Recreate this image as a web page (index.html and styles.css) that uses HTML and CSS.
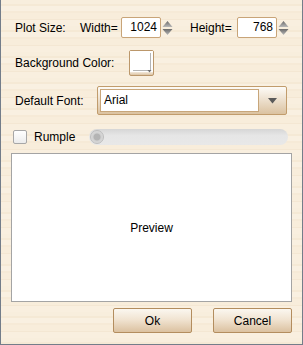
FILE: index.html
```html
<!DOCTYPE html>
<html lang="en">
  <head>
    <meta charset="UTF-8" />
    <title>Plot Settings</title>
    <link rel="stylesheet" href="styles.css">
  </head>
  <body>
    <div class="dialog">
      <!-- plot size -->
      <div class="row row-size">
        <span class="lbl-plot">Plot Size:</span>
        <span class="lbl-w">Width=</span>
        <div class="num">1024</div>
        <svg class="spin" width="11" height="21" viewBox="0 0 11 21">
          <defs>
            <linearGradient id="sg" x1="0" y1="0" x2="0" y2="1">
              <stop offset="0" stop-color="#6a6a6a" />
              <stop offset="1" stop-color="#b8b8b8" />
            </linearGradient>
          </defs>
          <polygon points="5.5,4 10.5,10 0.5,10" fill="url(#sg)" />
          <polygon points="0.5,12 10.5,12 5.5,18" fill="url(#sg)" />
        </svg>
        <span class="lbl-h">Height=</span>
        <div class="num">768</div>
        <svg class="spin" width="11" height="21" viewBox="0 0 11 21">
          <polygon points="5.5,4 10.5,10 0.5,10" fill="url(#sg)" />
          <polygon points="0.5,12 10.5,12 5.5,18" fill="url(#sg)" />
        </svg>
      </div>

      <!-- background colour -->
      <div class="row row-color">
        <span class="lbl-bg">Background Color:</span>
        <div class="color-btn">
          <svg width="23" height="24" viewBox="0 0 23 24">
            <rect x="0" y="0" width="23" height="21" fill="#fff" />
            <line x1="20.5" y1="2" x2="20.5" y2="19" stroke="#b4b4b4" />
            <line x1="3" y1="19.5" x2="21" y2="19.5" stroke="#b4b4b4" />
            <polygon points="17.5,19 21.5,19 19.5,21.5" fill="#707070" />
          </svg>
        </div>
      </div>

      <!-- default font -->
      <div class="row row-font">
        <span class="lbl-font">Default Font:</span>
        <div class="combo">
          <div class="combo-field">Arial</div>
          <div class="combo-arrow">
            <svg width="9" height="6" viewBox="0 0 9 6">
              <polygon points="0,0 9,0 4.5,5.5" fill="#5a5a5a" />
            </svg>
          </div>
        </div>
      </div>

      <!-- rumple -->
      <div class="row row-rumple">
        <div class="check"></div>
        <span class="lbl-rumple">Rumple</span>
        <div class="slider">
          <div class="knob"></div>
        </div>
      </div>

      <div class="preview">Preview</div>

      <div class="buttons">
        <button class="btn">Ok</button>
        <button class="btn">Cancel</button>
      </div>
    </div>
  </body>
</html>
```

FILE: styles.css
```css
* {
  margin: 0;
  padding: 0;
}

body {
  font-family: "Liberation Sans", Arial, sans-serif;
  font-size: 12px;
  color: #000;
}

.dialog {
  width: 303px;
  height: 345px;
  box-sizing: border-box;
  border: 1px solid #737d8a;
  border-top: 0;
  padding: 17px 10px 0;
  background-color: #f7ecda;
  background-image: repeating-linear-gradient(
    180deg,
    #f8eedd 0 4px,
    #f5e9d5 4px 6px,
    #f9f0e1 6px 11px,
    #f6ead7 11px 13px,
    #f8eddb 13px 19px,
    #f4e7d3 19px 20px,
    #f9efdf 20px 26px
  );
}

.row {
  display: flex;
  align-items: center;
}

.row-size {
  height: 21px;
  padding-left: 4px;
}

.lbl-plot {
  width: 65px;
}

.lbl-w {
  width: 41px;
}

.lbl-h {
  width: 47px;
  margin-left: 17px;
}

.num {
  width: 40px;
  height: 21px;
  box-sizing: border-box;
  border: 1px solid #c8a478;
  border-radius: 2px;
  background: #fff;
  text-align: right;
  padding-right: 3px;
  line-height: 19px;
}

.spin {
  margin-left: 1px;
}

.row-color {
  height: 26px;
  margin-top: 12px;
  padding-left: 4px;
}

.lbl-bg {
  width: 114px;
}

.color-btn {
  width: 25px;
  height: 26px;
  box-sizing: border-box;
  border: 1px solid #bb976b;
  border-radius: 2px;
  background: linear-gradient(#fff 0 80%, #dcc3a2);
}

.color-btn svg {
  display: block;
}

.row-font {
  height: 29px;
  margin-top: 10px;
  padding-left: 4px;
}

.lbl-font {
  width: 82px;
}

.combo {
  width: 190px;
  height: 29px;
  box-sizing: border-box;
  border: 1px solid #c19c6c;
  border-radius: 2px;
  padding: 2px 0 2px 2px;
  display: flex;
  background: linear-gradient(#fdfbf7, #dbc2a0);
}

.combo-field {
  flex: 1;
  background: #fff;
  border: 1px solid #c8a67a;
  padding-left: 3px;
  line-height: 21px;
}

.combo-arrow {
  width: 27px;
  display: flex;
  align-items: center;
  justify-content: center;
}

.row-rumple {
  height: 16px;
  margin-top: 14px;
  padding-left: 2px;
}

.check {
  width: 14px;
  height: 14px;
  box-sizing: border-box;
  border: 1px solid #a7a7a7;
  border-radius: 2px;
  background: linear-gradient(#ffffff, #ececec);
}

.lbl-rumple {
  width: 55px;
  margin-left: 7px;
}

.slider {
  width: 199px;
  height: 16px;
  border-radius: 8px;
  background: linear-gradient(#d6d6d6, #e6e6e6 40%, #e8e8e8);
  display: flex;
  align-items: center;
  padding-left: 1px;
  box-sizing: border-box;
}

.knob {
  width: 14px;
  height: 14px;
  box-sizing: border-box;
  border-radius: 50%;
  border: 1px solid #bdbdbd;
  background: radial-gradient(circle at 50% 50%, #b4b4b4 0 3px, #d0d0d0 4px, #e4e4e4);
}

.preview {
  margin-top: 8px;
  height: 149px;
  box-sizing: border-box;
  border: 1px solid #a4a4a4;
  background: #fff;
  display: flex;
  align-items: center;
  justify-content: center;
}

.buttons {
  margin-top: 6px;
  display: flex;
  justify-content: flex-end;
  gap: 21px;
}

.btn {
  width: 79px;
  height: 25px;
  border: 1px solid #b38d5e;
  border-radius: 2px;
  background: linear-gradient(#fbf7f0, #f1e4d2 45%, #dbc1a0);
  font: inherit;
  color: #000;
}
```
